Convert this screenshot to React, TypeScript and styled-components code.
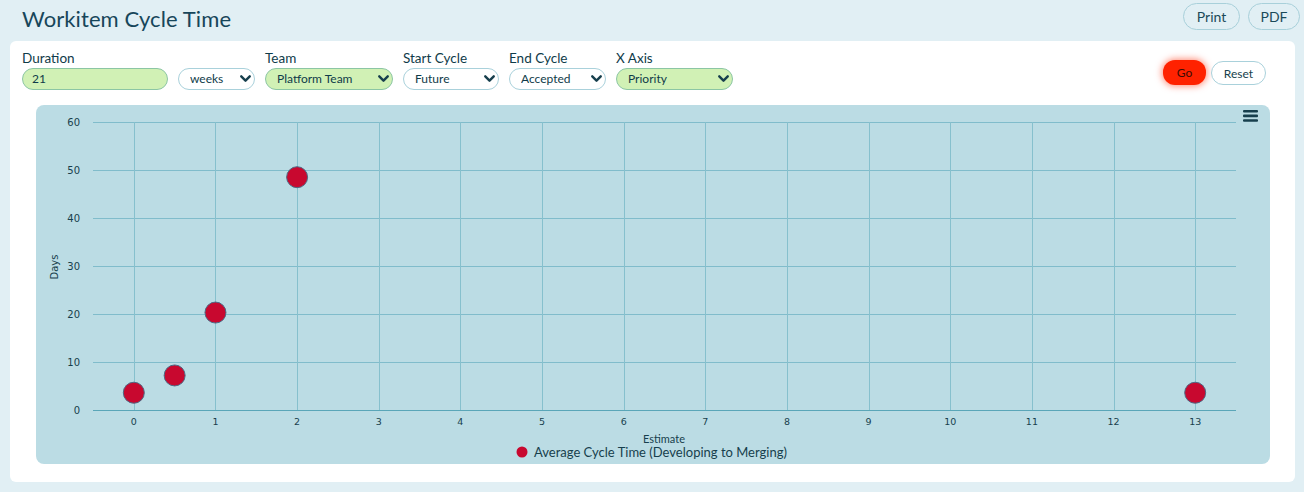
import React from "react";
import styled, { createGlobalStyle } from "styled-components";
import { ChevronDown } from "lucide-react";

const Global = createGlobalStyle`
  html, body { margin: 0; padding: 0; background: #e1eff4; }
  body { font-family: Lato, "Open Sans", sans-serif; color: #0f3b49; }
  * { box-sizing: border-box; }
`;

const Page = styled.div`
  width: 1304px;
  height: 492px;
  background: #e1eff4;
  overflow: hidden;
`;

const Header = styled.header`
  height: 41px;
  display: flex;
  align-items: flex-start;
  justify-content: space-between;
  padding: 0 4px 0 22px;
`;

const Title = styled.h1`
  margin: 5px 0 0;
  font-size: 22px;
  font-weight: 400;
  color: #17465a;
  letter-spacing: 0.1px;
`;

const HeaderActions = styled.div`
  display: flex;
  gap: 8px;
  padding-top: 3px;
`;

const PillButton = styled.button<{ $w: number }>`
  width: ${(p) => p.$w}px;
  height: 27px;
  border-radius: 14px;
  border: 1px solid #a8d0da;
  background: transparent;
  font-family: Lato, sans-serif;
  font-size: 14px;
  color: #1b4a59;
  padding: 0;
`;

const Card = styled.main`
  margin: 0 9px 0 10px;
  background: #ffffff;
  border-radius: 6px;
  padding: 9px 12px 18px;
  height: 441px;
`;

const FilterRow = styled.div`
  display: flex;
  align-items: flex-start;
  gap: 10px;
`;

const Field = styled.label`
  display: flex;
  flex-direction: column;
  gap: 1px;
`;

const FieldLabel = styled.span`
  height: 16px;
  font-size: 13.5px;
  line-height: 16px;
  color: #0f3b49;
  white-space: nowrap;
`;

const Spacer = styled.span`
  height: 16px;
`;

const ControlWrap = styled.div<{ $w: number }>`
  position: relative;
  width: ${(p) => p.$w}px;
  height: 22px;
`;

const controlBase = `
  width: 100%;
  height: 22px;
  border-radius: 11px;
  font-family: Lato, sans-serif;
  font-size: 12px;
  color: #0f3b49;
  outline: none;
  appearance: none;
  -webkit-appearance: none;
  margin: 0;
`;

const TextInput = styled.input`
  ${controlBase}
  background: #d1f1b5;
  border: 1px solid #8cc6a4;
  padding: 0 0 0 9px;
`;

const Select = styled.select<{ $green?: boolean }>`
  ${controlBase}
  background: ${(p) => (p.$green ? "#d1f1b5" : "#ffffff")};
  border: 1px solid ${(p) => (p.$green ? "#8cc6a4" : "#a9d1db")};
  padding: 0 22px 0 11px;
`;

const Chevron = styled(ChevronDown)`
  position: absolute;
  right: 1px;
  top: 2.5px;
  pointer-events: none;
  color: #173f4d;
`;

const Actions = styled.div`
  margin-left: auto;
  display: flex;
  gap: 5px;
  padding: 10px 17px 0 0;
`;

const GoButton = styled.button`
  width: 43px;
  height: 25px;
  border-radius: 12px;
  border: none;
  background: #ff2200;
  box-shadow: 0 0 7px 1px rgba(255, 40, 0, 0.55);
  font-family: Lato, sans-serif;
  font-size: 12px;
  color: #3b0b05;
  padding: 0;
`;

const ResetButton = styled.button`
  width: 55px;
  height: 24px;
  border-radius: 12px;
  border: 1px solid #a9d1db;
  background: #ffffff;
  font-family: Lato, sans-serif;
  font-size: 12px;
  color: #173f4d;
  padding: 0;
  margin-top: 1px;
`;

const ChartBox = styled.section`
  margin: 16px 13px 0 14px;
  height: 359px;
  background: #bbdce4;
  border-radius: 8px;
  overflow: hidden;
`;

const W = 1234;
const H = 359;
const PL = 57;
const PR = 1200;
const PT = 17;
const PB = 305;
const xs = (v: number) => PL + ((v + 0.5) / 14) * (PR - PL);
const ys = (v: number) => PB - (v / 60) * (PB - PT);

const points: [number, number][] = [
  [0, 3.6],
  [0.5, 7.2],
  [1, 20.3],
  [2, 48.5],
  [13, 3.6],
];

function Chart() {
  const xt = Array.from({ length: 14 }, (_, i) => i);
  const yt = [0, 10, 20, 30, 40, 50, 60];
  return (
    <svg width={W} height={H} viewBox={`0 0 ${W} ${H}`} style={{ display: "block" }}>
      {yt.map((v) => (
        <g key={`y${v}`}>
          {v !== 0 && (
            <line x1={PL} x2={PR} y1={ys(v) + 0.5} y2={ys(v) + 0.5} stroke="#80bccb" strokeWidth={1} />
          )}
          <text
            x={44}
            y={ys(v) + 4}
            textAnchor="end"
            fontFamily="DejaVu Sans, sans-serif"
            fontSize={10}
            fill="#173f4d"
          >
            {v}
          </text>
        </g>
      ))}
      {xt.map((v) => (
        <g key={`x${v}`}>
          <line x1={Math.round(xs(v)) + 0.5} x2={Math.round(xs(v)) + 0.5} y1={PT} y2={PB} stroke="#86c0cd" strokeWidth={1} />
          <text
            x={xs(v)}
            y={320}
            textAnchor="middle"
            fontFamily="DejaVu Sans, sans-serif"
            fontSize={9.5}
            fill="#173f4d"
          >
            {v}
          </text>
        </g>
      ))}
      <line x1={PL} x2={PR} y1={PB + 0.5} y2={PB + 0.5} stroke="#5aa6b8" strokeWidth={1.2} />
      <text
        transform={`translate(22 162) rotate(-90)`}
        textAnchor="middle"
        fontFamily="DejaVu Sans, sans-serif"
        fontSize={10}
        fill="#173f4d"
      >
        Days
      </text>
      <text x={628} y={338} textAnchor="middle" fontFamily="Lato, sans-serif" fontSize={11} fill="#173f4d">
        Estimate
      </text>
      <circle cx={486} cy={347} r={5.5} fill="#c8082f" />
      <text x={498} y={352} fontFamily="Lato, sans-serif" fontSize={13} fill="#173f4d">
        Average Cycle Time (Developing to Merging)
      </text>
      {points.map(([x, y], i) => (
        <circle key={i} cx={xs(x)} cy={ys(y)} r={10.5} fill="#c8082f" stroke="#4d6883" strokeWidth={1} />
      ))}
      <g fill="#173f4d">
        <rect x={1207} y={5} width={15} height={2.6} rx={1} />
        <rect x={1207} y={9.6} width={15} height={2.6} rx={1} />
        <rect x={1207} y={14.2} width={15} height={2.6} rx={1} />
      </g>
    </svg>
  );
}

type SelProps = { w: number; value: string; options: string[]; green?: boolean };
function SelectControl({ w, value, options, green }: SelProps) {
  return (
    <ControlWrap $w={w}>
      <Select $green={green} defaultValue={value}>
        {options.map((o) => (
          <option key={o}>{o}</option>
        ))}
      </Select>
      <Chevron size={17} strokeWidth={3.4} />
    </ControlWrap>
  );
}

export default function App() {
  return (
    <Page>
      <Global />
      <Header>
        <Title>Workitem Cycle Time</Title>
        <HeaderActions>
          <PillButton $w={57}>Print</PillButton>
          <PillButton $w={52}>PDF</PillButton>
        </HeaderActions>
      </Header>
      <Card>
        <FilterRow>
          <Field>
            <FieldLabel>Duration</FieldLabel>
            <ControlWrap $w={146}>
              <TextInput defaultValue="21" />
            </ControlWrap>
          </Field>
          <Field>
            <Spacer />
            <SelectControl w={77} value="weeks" options={["days", "weeks", "months"]} />
          </Field>
          <Field>
            <FieldLabel>Team</FieldLabel>
            <SelectControl w={128} value="Platform Team" options={["Platform Team"]} green />
          </Field>
          <Field>
            <FieldLabel>Start Cycle</FieldLabel>
            <SelectControl w={96} value="Future" options={["Future", "Developing"]} />
          </Field>
          <Field>
            <FieldLabel>End Cycle</FieldLabel>
            <SelectControl w={97} value="Accepted" options={["Accepted", "Merging"]} />
          </Field>
          <Field>
            <FieldLabel>X Axis</FieldLabel>
            <SelectControl w={117} value="Priority" options={["Priority", "Estimate"]} green />
          </Field>
          <Actions>
            <GoButton>Go</GoButton>
            <ResetButton>Reset</ResetButton>
          </Actions>
        </FilterRow>
        <ChartBox>
          <Chart />
        </ChartBox>
      </Card>
    </Page>
  );
}
